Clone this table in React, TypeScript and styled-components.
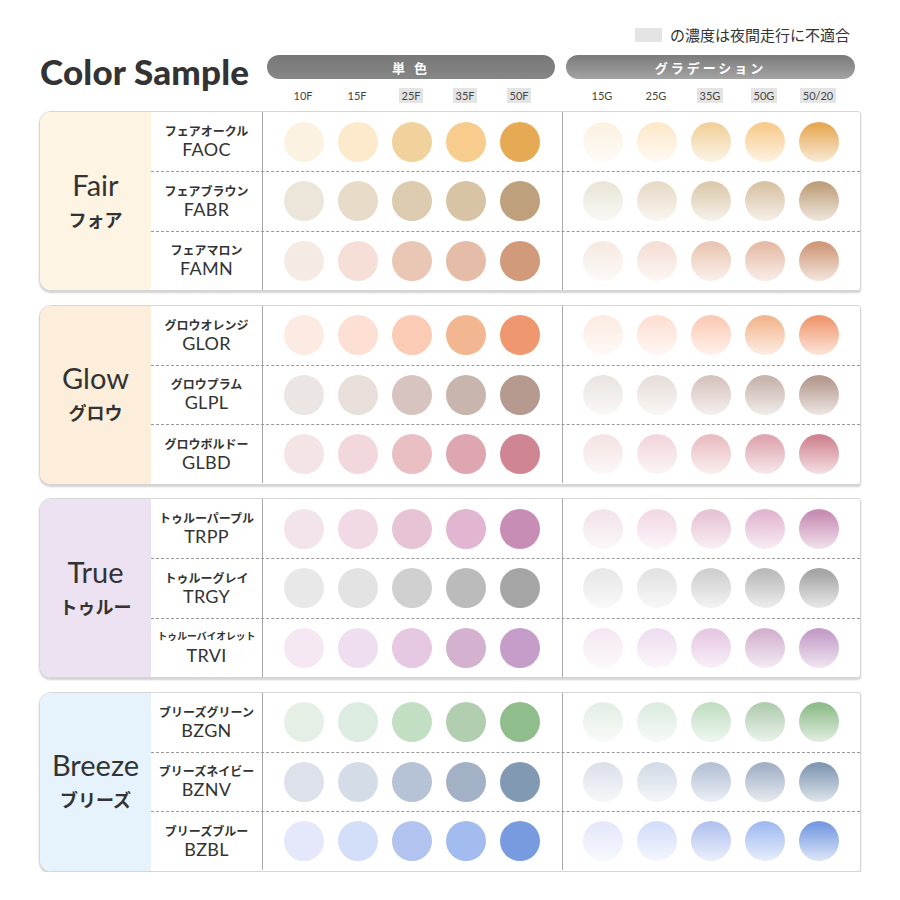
import styled, { createGlobalStyle, css } from 'styled-components';

const GlobalStyle = createGlobalStyle`
  body {
    margin: 0;
    background: #ffffff;
    font-family: 'Lato', 'Noto Sans CJK JP', sans-serif;
    color: #333333;
  }
`;

type Line = { jp: string; code: string; colors: string[] };
type Group = { en: string; jp: string; bg: string; lines: Line[] };

const SINGLE = [
  { label: '10F', mark: false },
  { label: '15F', mark: false },
  { label: '25F', mark: true },
  { label: '35F', mark: true },
  { label: '50F', mark: true },
];

const GRAD = [
  { label: '15G', mark: false },
  { label: '25G', mark: false },
  { label: '35G', mark: true },
  { label: '50G', mark: true },
  { label: '50/20', mark: true },
];

const GROUPS: Group[] = [
  {
    en: 'Fair',
    jp: 'フォア',
    bg: '#fdf4e4',
    lines: [
      { jp: 'フェアオークル', code: 'FAOC', colors: ['#fbf2e2', '#fde9cc', '#f1d29c', '#f7cc8d', '#e6aa55'] },
      { jp: 'フェアブラウン', code: 'FABR', colors: ['#ebe6d9', '#e8dbc7', '#dccbae', '#d9c3a5', '#bfa07c'] },
      { jp: 'フェアマロン', code: 'FAMN', colors: ['#f6ebe4', '#f5dfd6', '#e9c7b4', '#e5bca7', '#d09a7b'] },
    ],
  },
  {
    en: 'Glow',
    jp: 'グロウ',
    bg: '#fdeedc',
    lines: [
      { jp: 'グロウオレンジ', code: 'GLOR', colors: ['#fcebe2', '#fddfd3', '#fbcbb5', '#f2b790', '#ef9870'] },
      { jp: 'グロウプラム', code: 'GLPL', colors: ['#ebe5e3', '#e8dfdb', '#d7c4bf', '#c8b5ad', '#b69a90'] },
      { jp: 'グロウボルドー', code: 'GLBD', colors: ['#f4e4e5', '#f2d8dd', '#e9bfc3', '#dea6b1', '#cf8592'] },
    ],
  },
  {
    en: 'True',
    jp: 'トゥルー',
    bg: '#ede2f2',
    lines: [
      { jp: 'トゥルーパープル', code: 'TRPP', colors: ['#f2e4ea', '#f2d9e6', '#e6c3d5', '#e2b6d1', '#c78db4'] },
      { jp: 'トゥルーグレイ', code: 'TRGY', colors: ['#e8e8e8', '#e3e3e3', '#d0d0d0', '#bbbbbb', '#a5a5a5'] },
      { jp: 'トゥルーバイオレット', code: 'TRVI', colors: ['#f5e8f3', '#efdef0', '#e6c8e3', '#d4b2cf', '#c49dc8'] },
    ],
  },
  {
    en: 'Breeze',
    jp: 'ブリーズ',
    bg: '#e6f3fd',
    lines: [
      { jp: 'ブリーズグリーン', code: 'BZGN', colors: ['#e5efe6', '#dcece0', '#c2dfc4', '#b2ceb1', '#90bd8c'] },
      { jp: 'ブリーズネイビー', code: 'BZNV', colors: ['#dde1ea', '#d4dce7', '#b6c2d6', '#a3b1c6', '#8299b3'] },
      { jp: 'ブリーズブルー', code: 'BZBL', colors: ['#e4e8fa', '#d3def9', '#b3c3ef', '#a3bcf0', '#789be0'] },
    ],
  },
];

export default function App() {
  return (
    <Page>
      <GlobalStyle />
      <Legend>
        <LegendSwatch />
        <LegendText>の濃度は夜間走行に不適合</LegendText>
      </Legend>

      <Header>
        <Title>Color Sample</Title>
        <Pill>単 色</Pill>
        <Pill $grad>グラデーション</Pill>
        <LabelRow>
          {SINGLE.map(s => (
            <ColLabel key={s.label} $mark={s.mark}>{s.label}</ColLabel>
          ))}
        </LabelRow>
        <LabelRow>
          {GRAD.map(s => (
            <ColLabel key={s.label} $mark={s.mark}>{s.label}</ColLabel>
          ))}
        </LabelRow>
      </Header>

      <Cards>
        {GROUPS.map(g => (
          <Card key={g.en}>
            <GroupLabel $bg={g.bg}>
              <GroupEn>{g.en}</GroupEn>
              <GroupJp>{g.jp}</GroupJp>
            </GroupLabel>
            <Lines>
              {g.lines.map((l, i) => (
                <LineRow key={l.code} $first={i === 0}>
                  <NameCell>
                    <NameJp $long={l.jp.length > 8}>{l.jp}</NameJp>
                    <NameCode>{l.code}</NameCode>
                  </NameCell>
                  <Swatches>
                    {l.colors.map(c => (
                      <Dot key={c} $color={c} />
                    ))}
                  </Swatches>
                  <Swatches>
                    {l.colors.map(c => (
                      <Dot key={c} $color={c} $grad />
                    ))}
                  </Swatches>
                </LineRow>
              ))}
            </Lines>
          </Card>
        ))}
      </Cards>
    </Page>
  );
}

const Page = styled.div`
  width: 822px;
  padding: 27px 39px 0 39px;
`;

const Legend = styled.div`
  display: flex;
  justify-content: flex-end;
  align-items: center;
  gap: 8px;
  height: 16px;
  padding-right: 11px;
  margin-bottom: 12px;
`;

const LegendSwatch = styled.span`
  width: 27px;
  height: 14px;
  background: #e4e4e4;
`;

const LegendText = styled.span`
  font-family: 'Noto Sans CJK JP', sans-serif;
  font-size: 15px;
  color: #333;
  line-height: 16px;
`;

const Header = styled.div`
  display: grid;
  grid-template-columns: 223px 299px 300px;
  grid-template-rows: 24px 24px;
`;

const Title = styled.h1`
  grid-row: 1 / span 2;
  margin: -3px 0 0 0;
  font-family: 'Lato', sans-serif;
  font-weight: 900;
  font-size: 35px;
  line-height: 38px;
  letter-spacing: 0.2px;
  color: #333333;
  padding-left: 1px;
`;

const Pill = styled.div<{ $grad?: boolean }>`
  margin: 0 6px 0 5px;
  border-radius: 12px;
  display: flex;
  align-items: center;
  justify-content: center;
  color: #ffffff;
  font-family: 'Noto Sans CJK JP', sans-serif;
  font-weight: 700;
  font-size: 13px;
  letter-spacing: 3px;
  background: ${({ $grad }) =>
    $grad ? 'linear-gradient(to bottom, #7b7b7b, #a3a3a3)' : 'linear-gradient(to bottom, #777777, #868686)'};
`;

const LabelRow = styled.div`
  display: grid;
  grid-template-columns: repeat(5, 54px);
  padding-left: 14px;
  align-items: center;
`;

const ColLabel = styled.span<{ $mark: boolean }>`
  justify-self: center;
  font-family: 'Lato', sans-serif;
  font-size: 11px;
  line-height: 15px;
  padding: 0 3px;
  color: #444;
  margin-top: 9px;
  ${({ $mark }) =>
    $mark &&
    css`
      background: #e4e4e4;
    `}
`;

const Cards = styled.div`
  display: flex;
  flex-direction: column;
  gap: 13.5px;
  margin-top: 8px;
`;

const Card = styled.div`
  display: grid;
  grid-template-columns: 111px 1fr;
  height: 180px;
  box-sizing: border-box;
  border: 1px solid #d6d6d6;
  border-radius: 12px 3px 3px 12px;
  box-shadow: 0 2px 2px rgba(0, 0, 0, 0.18);
  background: #ffffff;
  overflow: hidden;
`;

const GroupLabel = styled.div<{ $bg: string }>`
  background: ${({ $bg }) => $bg};
  display: flex;
  flex-direction: column;
  align-items: center;
  justify-content: center;
  padding-bottom: 2px;
`;

const GroupEn = styled.div`
  font-family: 'Lato', sans-serif;
  font-size: 29px;
  line-height: 32px;
  color: #333;
`;

const GroupJp = styled.div`
  font-family: 'Noto Sans CJK JP', sans-serif;
  font-weight: 700;
  font-size: 18px;
  line-height: 26px;
  margin-top: 5px;
  color: #333;
`;

const Lines = styled.div`
  display: grid;
  grid-template-rows: repeat(3, 1fr);
`;

const LineRow = styled.div<{ $first: boolean }>`
  display: grid;
  grid-template-columns: 112px 299px 1fr;
  border-top: ${({ $first }) => ($first ? 'none' : '1px dashed #9a9a9a')};
`;

const NameCell = styled.div`
  display: flex;
  flex-direction: column;
  align-items: center;
  justify-content: center;
  border-right: 1px solid #a8a8a8;
`;

const NameJp = styled.div<{ $long: boolean }>`
  font-family: 'Noto Sans CJK JP', sans-serif;
  font-weight: 700;
  font-size: ${({ $long }) => ($long ? '9.8px' : '12px')};
  line-height: 15px;
  color: #333;
  white-space: nowrap;
`;

const NameCode = styled.div`
  font-family: 'Lato', sans-serif;
  font-size: 18px;
  line-height: 22px;
  color: #333;
  letter-spacing: 0.3px;
`;

const Swatches = styled.div`
  display: grid;
  grid-template-columns: repeat(5, 54px);
  padding-left: 14px;
  align-items: center;
  justify-items: center;
  & + & {
    border-left: 1px solid #a8a8a8;
    padding-left: 13px;
  }
`;

const Dot = styled.span<{ $color: string; $grad?: boolean }>`
  width: 40px;
  height: 40px;
  border-radius: 50%;
  background: ${({ $color, $grad }) =>
    $grad
      ? `linear-gradient(to bottom, ${$color} 10%, color-mix(in srgb, ${$color} 25%, #ffffff) 100%)`
      : $color};
`;
